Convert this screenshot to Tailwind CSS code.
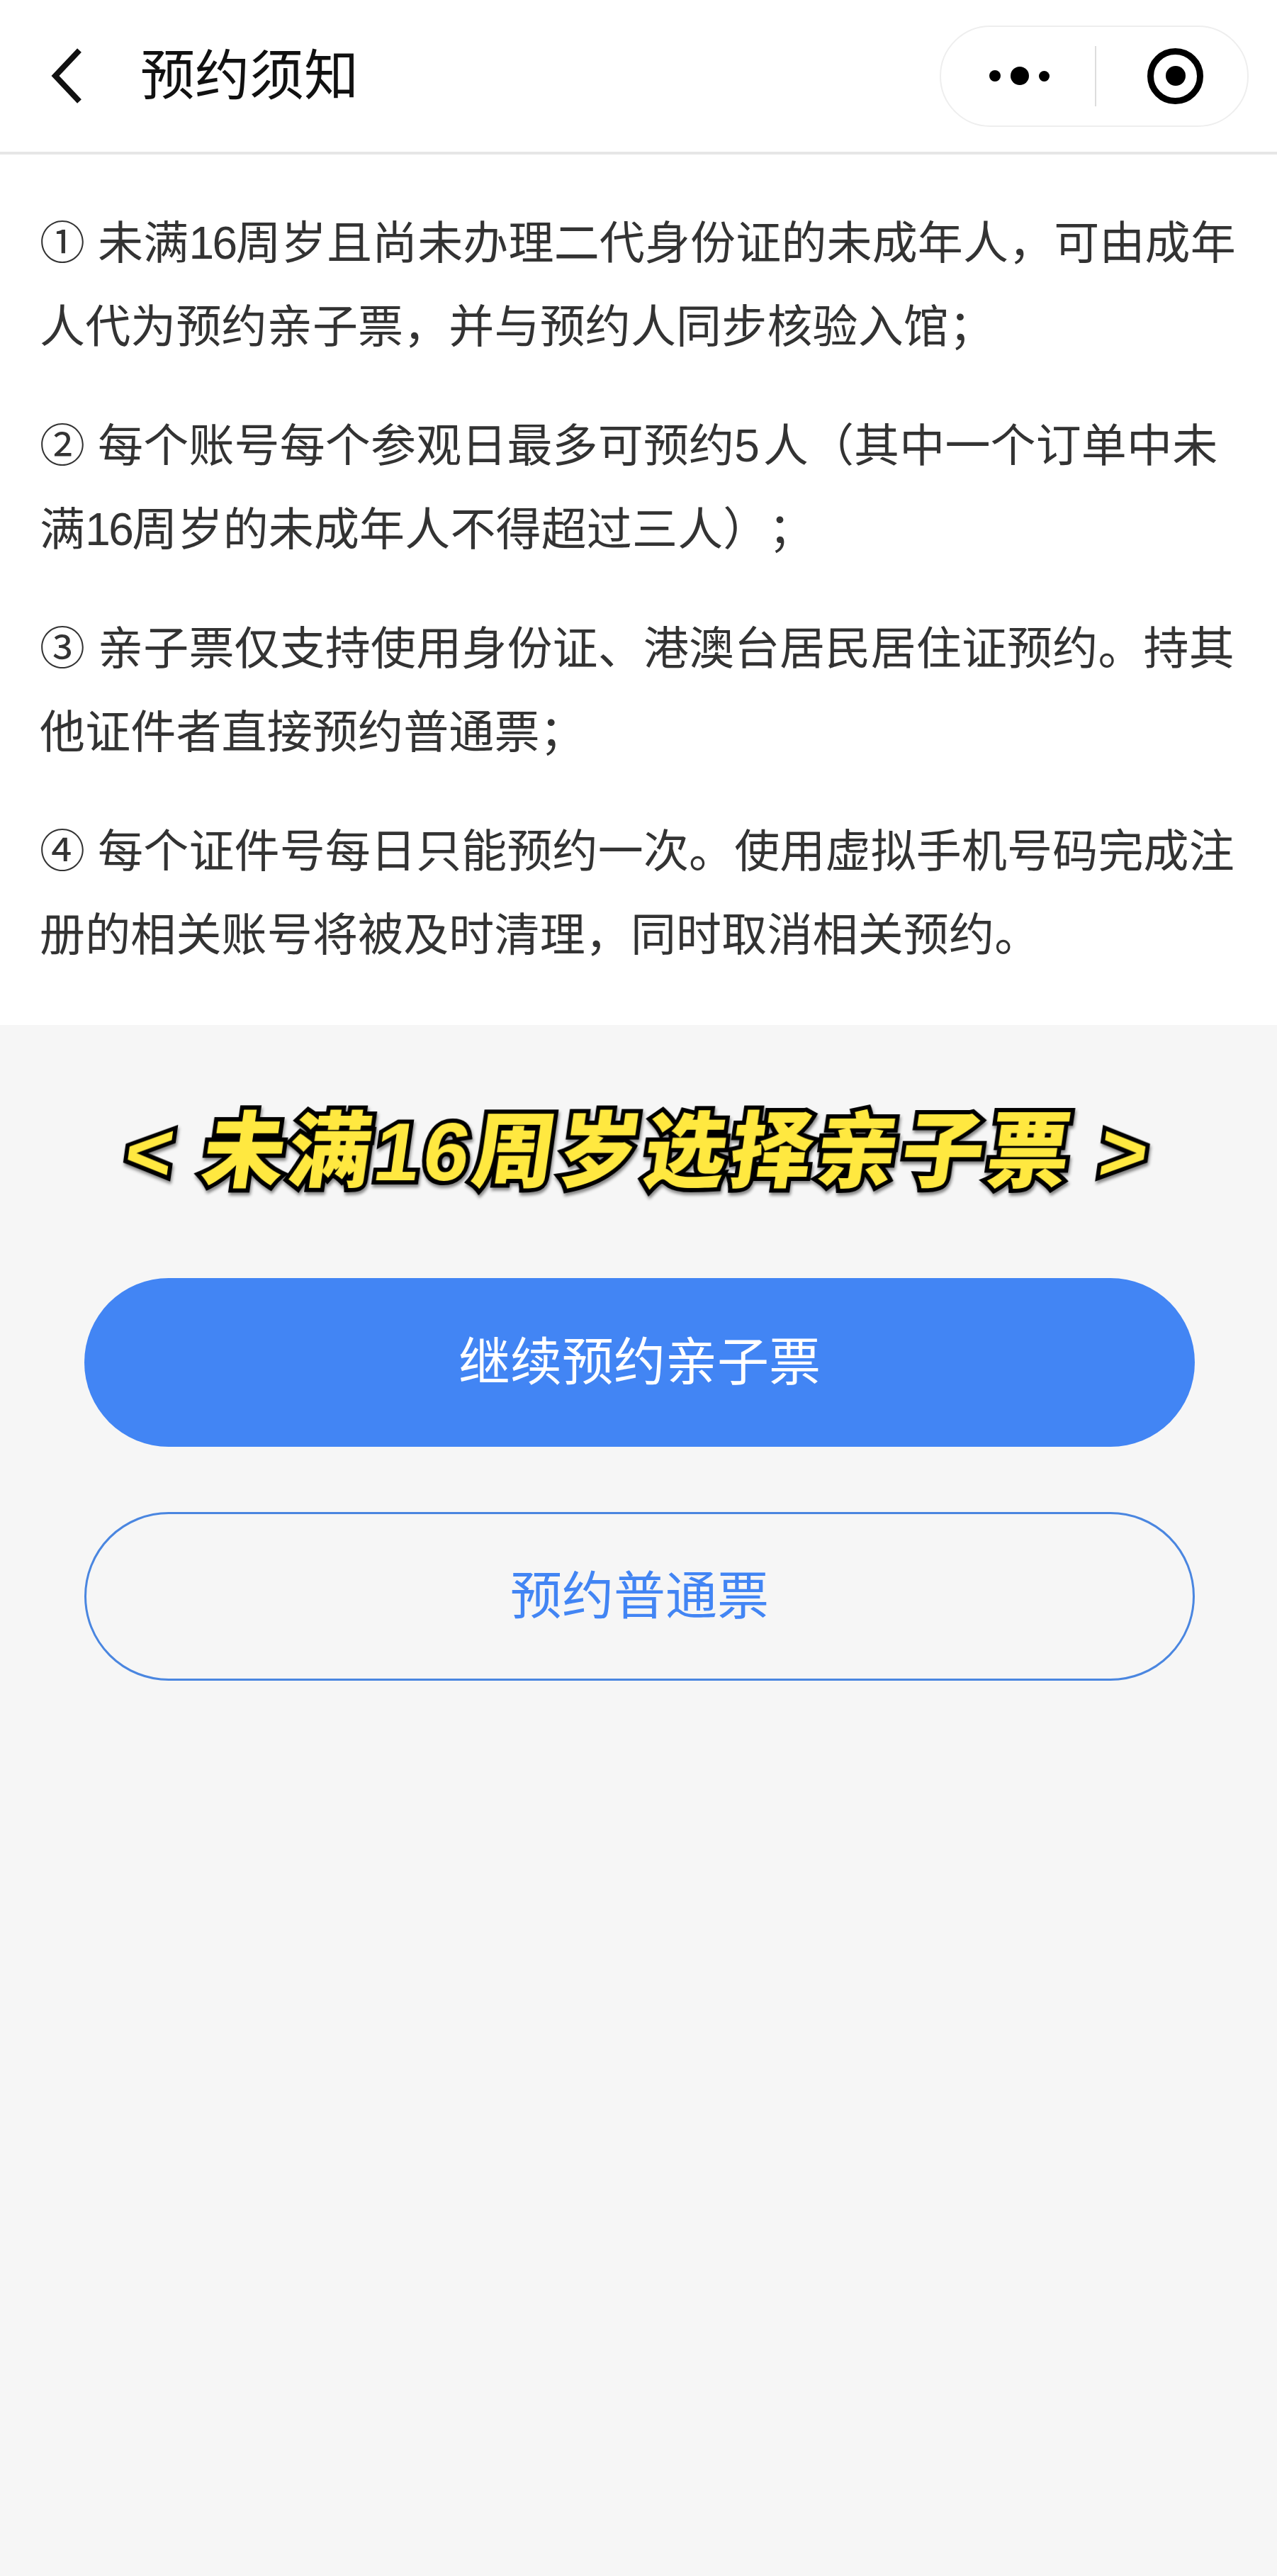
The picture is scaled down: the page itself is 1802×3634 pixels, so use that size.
<!DOCTYPE html>
<html lang="zh-CN">
<head>
  <meta charset="UTF-8" />
  <title>预约须知</title>
  <script src="https://cdn.jsdelivr.net/npm/@tailwindcss/browser@4"></script>
</head>
<body class="bg-[#f6f6f6] min-h-screen font-['Liberation_Sans','Noto_Sans_CJK_SC',sans-serif]">

  <!-- Header -->
  <header class="h-[218px] bg-white border-b-4 border-[#e6e6e6] flex items-center pl-[70px] pr-[40px]">
    <svg class="w-[48px] h-[78px]" viewBox="0 0 48 78" fill="none" stroke="#111" stroke-width="8" stroke-linecap="butt" stroke-linejoin="miter">
      <path d="M42 3 L8 39 L42 75" />
    </svg>
    <h1 class="ml-[80px] text-[77px] leading-none text-[#111]">预约须知</h1>
    <!-- capsule -->
    <div class="ml-auto w-[436px] h-[143px] rounded-full border-2 border-[#eeeeee] flex items-center">
      <div class="w-[217px] flex items-center justify-center pl-[4px] gap-[14px]">
        <span class="w-[16px] h-[16px] rounded-full bg-black"></span>
        <span class="w-[26px] h-[26px] rounded-full bg-black"></span>
        <span class="w-[15px] h-[15px] rounded-full bg-black"></span>
      </div>
      <div class="w-[2px] h-[85px] bg-[#dddddd]"></div>
      <div class="flex-1 flex items-center justify-center pl-[10px]">
        <div class="w-[79px] h-[79px] rounded-full border-[9px] border-black flex items-center justify-center">
          <span class="w-[28px] h-[28px] rounded-full bg-black"></span>
        </div>
      </div>
    </div>
  </header>

  <!-- Notice text -->
  <section class="bg-white pt-[66px] pb-[68px] px-[56px] flex flex-col gap-[50px] text-[64px] leading-[118px] tracking-[0.15px] text-[#333333] whitespace-nowrap [text-spacing-trim:space-all]">
    <p>① 未满<span class="tracking-[-2.5px]">16</span>周岁且尚未办理二代身份证的未成年人，可由成年<br>人代为预约亲子票，并与预约人同步核验入馆；</p>
    <p>② 每个账号每个参观日最多可预约<span class="tracking-[5px]">5</span>人（其中一个订单中未<br>满<span class="tracking-[-2.5px]">16</span>周岁的未成年人不得超过三人）；</p>
    <p>③ 亲子票仅支持使用身份证、港澳台居民居住证预约。持其<br>他证件者直接预约普通票；</p>
    <p>④ 每个证件号每日只能预约一次。使用虚拟手机号码完成注<br>册的相关账号将被及时清理，同时取消相关预约。</p>
  </section>

  <!-- Hint -->
  <div class="h-[357px] flex items-center justify-center">
    <p class="skew-x-[-8deg] text-[116px] leading-none font-black tracking-[5px] text-[#ffe840] whitespace-nowrap [-webkit-text-stroke:12px_#000] [paint-order:stroke_fill] [filter:drop-shadow(2px_4px_2px_rgba(0,0,0,0.45))]">&lt; 未满16周岁选择亲子票 &gt;</p>
  </div>

  <!-- Buttons -->
  <div class="ml-[119px] mr-[116px] flex flex-col gap-[92px]">
    <button class="h-[238px] rounded-full bg-[#4285f4] text-white text-[73px]">继续预约亲子票</button>
    <button class="h-[238px] rounded-full border-[3px] border-[#4a86e0] text-[#4285f4] text-[73px]">预约普通票</button>
  </div>

</body>
</html>
